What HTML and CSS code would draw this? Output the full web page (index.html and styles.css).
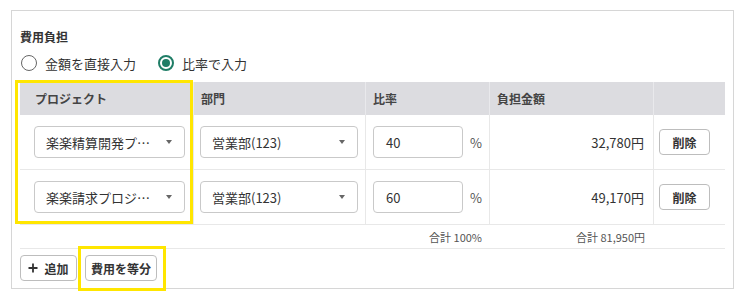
FILE: index.html
```html
<!DOCTYPE html>
<html lang="ja">
<head>
<meta charset="utf-8">
<link rel="stylesheet" href="styles.css">
</head>
<body>
<div class="card">
  <div class="title">費用負担</div>
  <div class="radios">
    <label class="radio"><span class="circle"></span>金額を直接入力</label>
    <label class="radio on"><span class="circle"></span>比率で入力</label>
  </div>
  <div class="grid">
    <div class="row head">
      <div class="cell c-proj">プロジェクト</div>
      <div class="cell c-dept">部門</div>
      <div class="cell c-ratio">比率</div>
      <div class="cell c-amt">負担金額</div>
      <div class="cell c-del"></div>
    </div>
    <div class="row body">
      <div class="cell c-proj"><div class="select proj"><span class="val">楽楽精算開発プ…</span><span class="caret"></span></div></div>
      <div class="cell c-dept"><div class="select dept"><span class="val">営業部(123)</span><span class="caret"></span></div></div>
      <div class="cell c-ratio"><div class="input">40</div><span class="pct">%</span></div>
      <div class="cell c-amt">32,780円</div>
      <div class="cell c-del"><button class="btn del">削除</button></div>
    </div>
    <div class="row body">
      <div class="cell c-proj"><div class="select proj"><span class="val">楽楽請求プロジ…</span><span class="caret"></span></div></div>
      <div class="cell c-dept"><div class="select dept"><span class="val">営業部(123)</span><span class="caret"></span></div></div>
      <div class="cell c-ratio"><div class="input">60</div><span class="pct">%</span></div>
      <div class="cell c-amt">49,170円</div>
      <div class="cell c-del"><button class="btn del">削除</button></div>
    </div>
    <div class="row foot">
      <div class="cell c-proj"></div>
      <div class="cell c-dept"></div>
      <div class="cell c-ratio">合計 100%</div>
      <div class="cell c-amt">合計 81,950円</div>
      <div class="cell c-del"></div>
    </div>
  </div>
  <div class="actions">
    <button class="btn add"><svg class="plus" width="10" height="10" viewBox="0 0 10 10"><path d="M5 0.5V9.5M0.5 5H9.5" stroke="#333" stroke-width="1.8" fill="none"/></svg>追加</button>
    <button class="btn equal">費用を等分</button>
  </div>
</div>
<div class="hl hl-proj"></div>
<div class="hl hl-equal"></div>
</body>
</html>
```

FILE: styles.css
```css
* { box-sizing: border-box; }
body {
  margin: 0;
  background: #fff;
  font-family: "Noto Sans CJK JP", "Noto Sans", sans-serif;
  color: #333;
}
.card {
  margin: 10px 0 0 11px;
  width: 723px;
  height: 279px;
  border: 1px solid #d6d6d6;
  padding: 18px 8px 0 8px;
}
.title {
  font-size: 12px;
  font-weight: 700;
  line-height: 16px;
  height: 16px;
  color: #333;
}
.radios {
  margin-top: 8px;
  height: 20px;
  display: flex;
  align-items: center;
  font-size: 13px;
  color: #333;
}
.radio {
  display: flex;
  align-items: center;
  margin-right: 22px;
}
.radio:first-child { margin-left: 1px; }
.circle {
  width: 16px;
  height: 16px;
  border-radius: 50%;
  border: 1.5px solid #666;
  margin-right: 8px;
  display: flex;
  align-items: center;
  justify-content: center;
}
.radio.on .circle { border: 2px solid #1f7d66; }
.radio.on .circle::after {
  content: "";
  width: 8px;
  height: 8px;
  border-radius: 50%;
  background: #1f7d66;
}
.grid {
  margin-top: 9px;
  width: 705px;
}
.row {
  display: grid;
  grid-template-columns: 173px 172px 124px 164px 72px;
}
.cell {
  display: flex;
  align-items: center;
}
.head {
  height: 33px;
  background: #dcdce0;
  font-size: 12px;
  font-weight: 700;
  color: #444;
}
.head .cell + .cell { border-left: 1px solid #e9e9ec; }
.head .c-proj { padding-left: 15px; }
.head .c-dept, .head .c-ratio, .head .c-amt { padding-left: 7px; }
.body {
  height: 55px;
  border-bottom: 1px solid #e8e8e8;
  font-size: 13px;
}
.body .cell + .cell { border-left: 1px solid #e8e8e8; }
.body .c-proj { padding-left: 14px; }
.body .c-dept { padding-left: 6px; }
.body .c-ratio { padding-left: 7px; }
.body .c-amt { justify-content: flex-end; padding-right: 9px; }
.body .c-del { padding-left: 5px; }
.select {
  height: 32px;
  border: 1px solid #c9c9c9;
  border-radius: 4px;
  display: flex;
  align-items: center;
  justify-content: space-between;
  padding: 0 12px 0 11px;
  color: #333;
  background: #fff;
}
.select.proj { width: 151px; }
.select.dept { width: 158px; }
.caret {
  width: 0;
  height: 0;
  border-top: 4px solid #666;
  border-left: 3.5px solid transparent;
  border-right: 3.5px solid transparent;
}
.input {
  width: 90px;
  height: 32px;
  border: 1px solid #c9c9c9;
  border-radius: 4px;
  display: flex;
  align-items: center;
  padding-left: 12px;
}
.pct {
  margin-left: 7px;
  color: #555;
}
.foot {
  height: 24px;
  border-bottom: 1px solid #e8e8e8;
  font-size: 11px;
  color: #555;
}
.foot .c-ratio { justify-content: flex-end; padding-right: 7px; }
.foot .c-amt { justify-content: flex-end; padding-right: 8px; }
.btn {
  height: 26px;
  border: 1px solid #bdbdbd;
  border-radius: 4px;
  background: #fff;
  font-family: inherit;
  font-size: 12px;
  font-weight: 700;
  color: #333;
  padding: 0;
  display: flex;
  align-items: center;
  justify-content: center;
}
.btn.del { width: 51px; }
.actions {
  margin-top: 6px;
  display: flex;
  gap: 8px;
}
.btn.add { width: 57px; }
.plus { margin-right: 6px; }
.btn.equal { width: 72px; }
.hl {
  position: absolute;
  border: 3px solid #ffe600;
}
.hl-proj { left: 15px; top: 80px; width: 178px; height: 144px; }
.hl-equal { left: 78px; top: 246px; width: 88px; height: 45px; }
```
